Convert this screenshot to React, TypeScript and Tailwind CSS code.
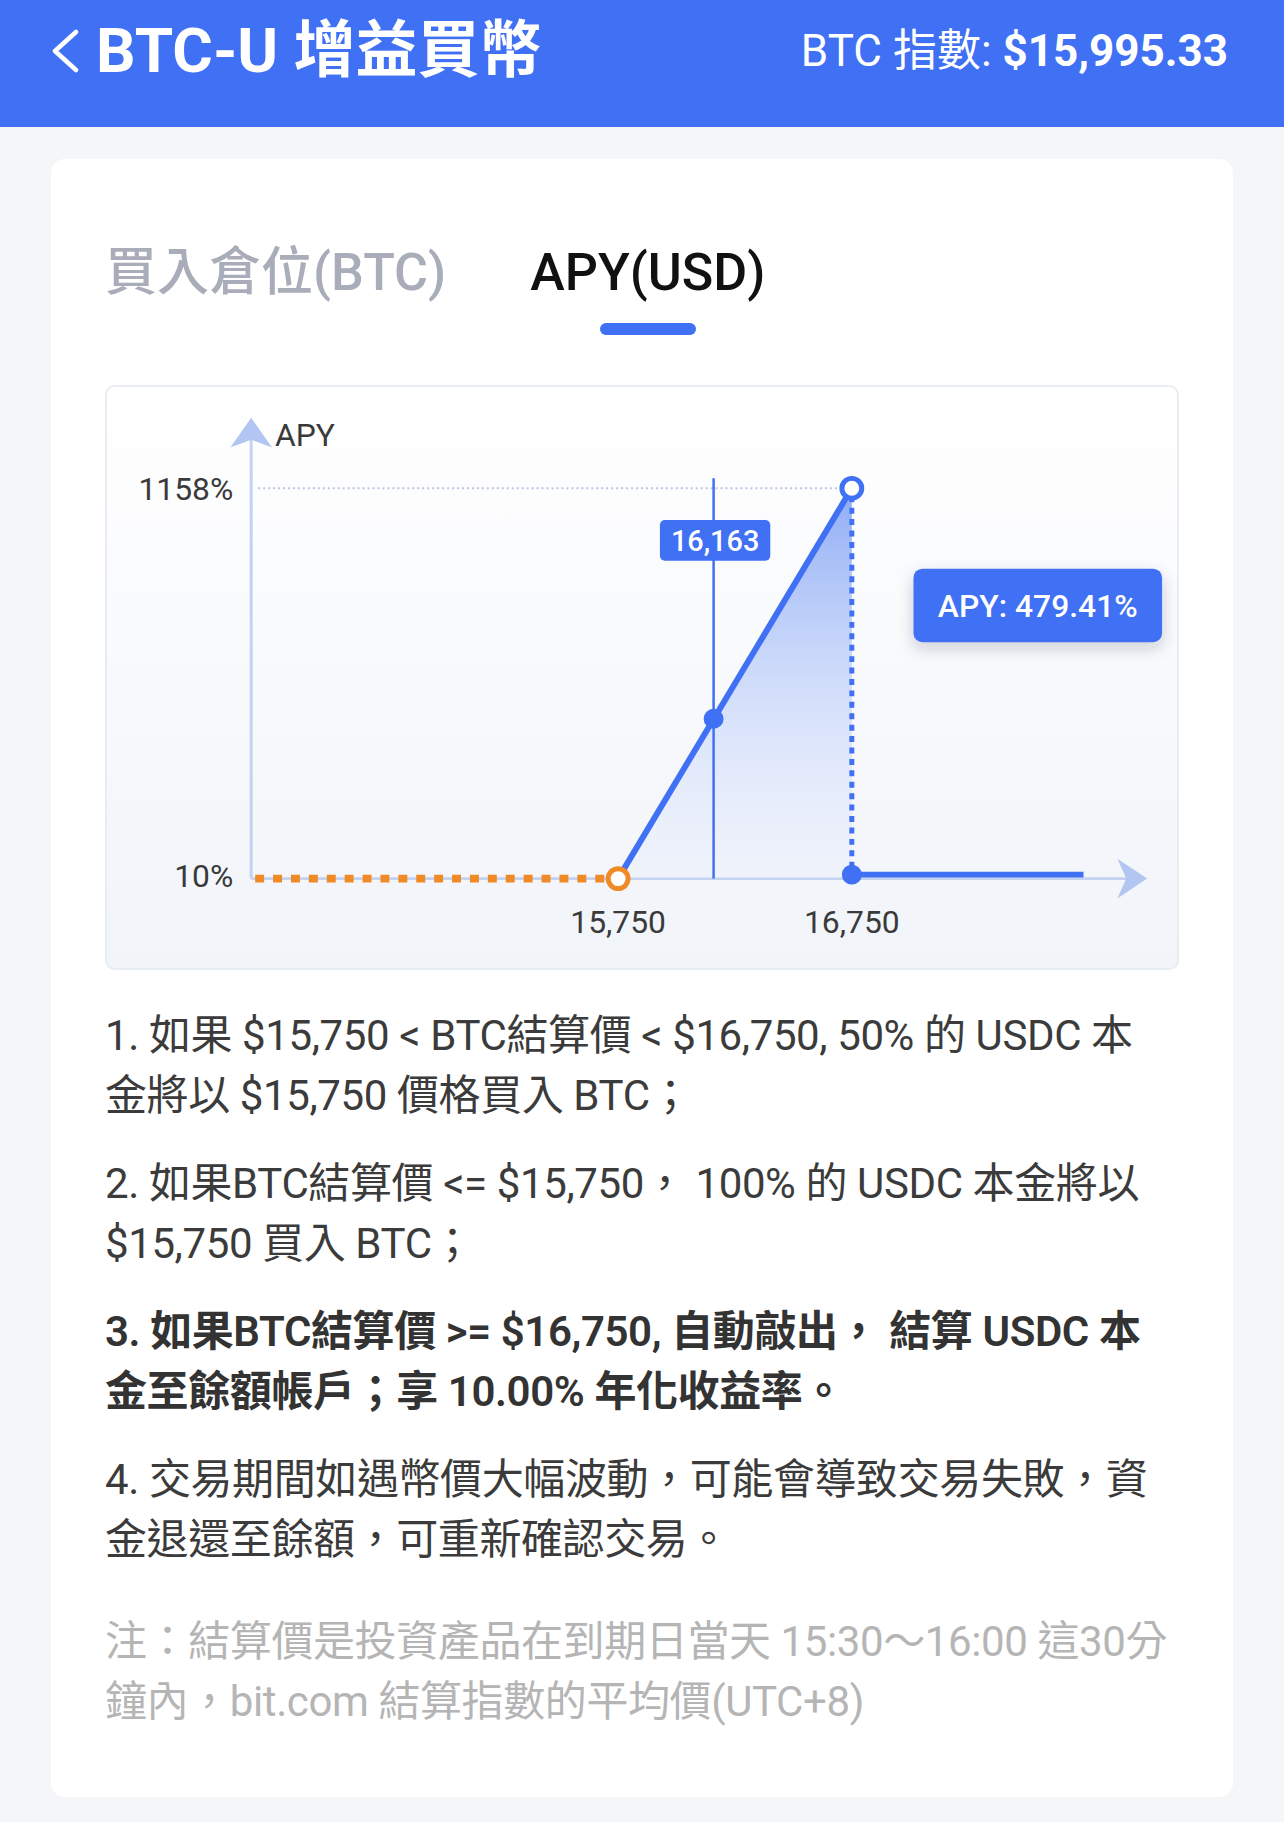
const BLUE = "#4070f4";

function ApyChart() {
  return (
    <div className="mt-[50px] h-[585px] w-full overflow-hidden rounded-[10px] border-2 border-[#e8ecf3] bg-linear-to-b from-white to-[#f1f4f9]">
      <svg viewBox="0 0 1076 585" preserveAspectRatio="none" className="block h-full w-full">
        <defs>
          <linearGradient id="apyFill" x1="0" y1="0" x2="0" y2="1">
            <stop offset="0" stopColor="#8eacf5" stopOpacity="1" />
            <stop offset="1" stopColor="#e6edfc" stopOpacity="0.3" />
          </linearGradient>
          <filter id="tipShadow" x="-20%" y="-40%" width="140%" height="190%">
            <feDropShadow dx="0" dy="6" stdDeviation="8" floodColor="#1d2a4a" floodOpacity="0.2" />
          </filter>
        </defs>

        {/* axes */}
        <line x1="145" y1="52" x2="145" y2="495" stroke="#c4d2f1" strokeWidth="3" />
        <path d="M145 31 L166 61 L145 53 L124 61 Z" fill="#b3c6f1" />
        <line x1="145" y1="495" x2="1030" y2="495" stroke="#c4d2f1" strokeWidth="3" />
        <path d="M1046 495 L1016 475 L1025 495 L1016 515 Z" fill="#b3c6f1" />

        {/* cap line */}
        <line x1="152" y1="102" x2="749" y2="102" stroke="#b9c6de" strokeWidth="2" strokeDasharray="2 3" />

        {/* labels */}
        <text x="169" y="48" dy="0.35em" fontSize="32" fill="#3a3a3a">APY</text>
        <text x="127" y="103" dy="0.35em" fontSize="32" fill="#3a3a3a" textAnchor="end">1158%</text>
        <text x="127" y="492" dy="0.35em" fontSize="32" fill="#3a3a3a" textAnchor="end">10%</text>
        <text x="514" y="539" dy="0.35em" fontSize="32" fill="#3a3a3a" textAnchor="middle">15,750</text>
        <text x="749" y="539" dy="0.35em" fontSize="32" fill="#3a3a3a" textAnchor="middle">16,750</text>

        {/* filled area */}
        <path d="M514 495 L749 102 L749 495 Z" fill="url(#apyFill)" />

        {/* orange floor */}
        <line x1="149" y1="495" x2="506" y2="495" stroke="#f08a26" strokeWidth="8" strokeDasharray="9 9" />

        {/* current price marker */}
        <line x1="610" y1="92" x2="610" y2="495" stroke={BLUE} strokeWidth="2.5" />

        {/* payoff line */}
        <line x1="514" y1="495" x2="749" y2="102" stroke={BLUE} strokeWidth="6" />
        <line x1="749" y1="110" x2="749" y2="488" stroke={BLUE} strokeWidth="5" strokeDasharray="6 5.5" />
        <line x1="758" y1="491" x2="982" y2="491" stroke={BLUE} strokeWidth="6" />

        {/* points */}
        <circle cx="514" cy="495" r="10" fill="white" stroke="#f08a26" strokeWidth="5" />
        <circle cx="749" cy="102" r="10" fill="white" stroke={BLUE} strokeWidth="5" />
        <circle cx="749" cy="491" r="10" fill={BLUE} />
        <circle cx="610" cy="334" r="10" fill={BLUE} />

        {/* price badge */}
        <rect x="556" y="134" width="111" height="41" rx="5" fill={BLUE} />
        <text x="611.5" y="155" dy="0.35em" fontSize="29" fill="white" textAnchor="middle" fontWeight="500">16,163</text>

        {/* tooltip */}
        <rect x="811" y="183" width="250" height="74" rx="9" fill={BLUE} filter="url(#tipShadow)" />
        <text x="936" y="220" dy="0.35em" fontSize="32" fill="white" textAnchor="middle" fontWeight="500">APY: 479.41%</text>
      </svg>
    </div>
  );
}

function Para({ lines, className = "" }: { lines: string[]; className?: string }) {
  return (
    <p className={`text-[42px] leading-[60px] tracking-[-0.4px] ${className}`}>
      {lines.map((l, i) => (
        <span key={i} className="block whitespace-nowrap">
          {l}
        </span>
      ))}
    </p>
  );
}

export default function App() {
  return (
    <div className="min-h-[1822px] w-full bg-[#f5f6f8] font-[Roboto,'Noto_Sans_CJK_TC',sans-serif]">
      {/* Header */}
      <header className="h-[127px] bg-[#4070f4] pl-[50px] pr-[56px] pt-[14px]">
        <div className="flex h-[74px] items-center justify-between">
          <div className="flex items-center gap-[16px]">
            <svg width="30" height="44" viewBox="0 0 30 44" fill="none">
              <path d="M26 3 L5 22 L26 41" stroke="white" strokeWidth="4.5" strokeLinecap="round" strokeLinejoin="round" />
            </svg>
            <h1 className="text-[62px] font-bold leading-none text-white">BTC-U 增益買幣</h1>
          </div>
          <div className="text-[44px] leading-none text-white">
            BTC 指數: <span className="font-bold">$15,995.33</span>
          </div>
        </div>
      </header>

      <main className="px-[51px] pb-[25px] pt-[32px]">
        <div className="rounded-[14px] bg-white px-[54px] pb-[65px] pt-[88px]">
          {/* Tabs */}
          <div className="flex items-start gap-[84px]">
            <div className="text-[52px] font-medium leading-[52px] text-[#a9adb9]">買入倉位(BTC)</div>
            <div className="flex flex-col items-center">
              <div className="text-[52px] font-medium leading-[52px] text-[#111]">APY(USD)</div>
              <div className="mt-[24px] h-[12px] w-[96px] rounded-full bg-[#4070f4]" />
            </div>
          </div>

          <ApyChart />

          {/* Rules */}
          <div className="mt-[36px] space-y-[28px] text-[#3b3b3b]">
            <Para
              lines={[
                "1. 如果 $15,750 < BTC結算價 < $16,750, 50% 的 USDC 本",
                "金將以 $15,750 價格買入 BTC；",
              ]}
            />
            <Para
              lines={[
                "2. 如果BTC結算價 <= $15,750， 100% 的 USDC 本金將以",
                "$15,750 買入 BTC；",
              ]}
            />
            <Para
              className="font-semibold text-[#333]"
              lines={[
                "3. 如果BTC結算價 >= $16,750, 自動敲出， 結算 USDC 本",
                "金至餘額帳戶；享 10.00% 年化收益率。",
              ]}
            />
            <Para
              lines={[
                "4. 交易期間如遇幣價大幅波動，可能會導致交易失敗，資",
                "金退還至餘額，可重新確認交易。",
              ]}
            />
          </div>

          <Para
            className="mt-[42px] text-[#b5b5b5]"
            lines={[
              "注：結算價是投資產品在到期日當天 15:30～16:00 這30分",
              "鐘內，bit.com 結算指數的平均價(UTC+8)",
            ]}
          />
        </div>
      </main>
    </div>
  );
}
